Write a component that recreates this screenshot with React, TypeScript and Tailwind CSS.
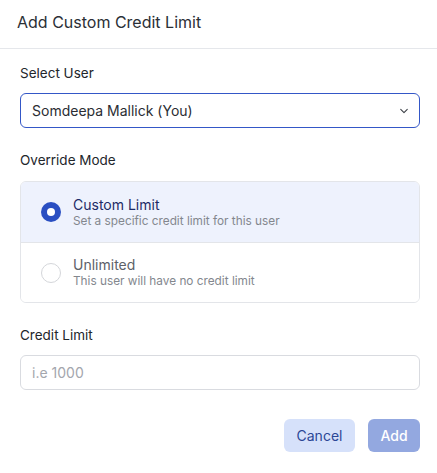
import { useState } from "react";

type Mode = "custom" | "unlimited";

const modes: { id: Mode; title: string; desc: string }[] = [
  { id: "custom", title: "Custom Limit", desc: "Set a specific credit limit for this user" },
  { id: "unlimited", title: "Unlimited", desc: "This user will have no credit limit" },
];

export default function App() {
  const [mode, setMode] = useState<Mode>("custom");
  const [limit, setLimit] = useState("");

  return (
    <div className="w-[437px] h-[473px] bg-white font-['Inter',sans-serif] text-[#1f2328]">
      <div className="h-[49px] border-b border-[#e5e7eb] pl-[17px] flex items-center">
        <h2 className="text-[16px] leading-none text-[#2b2f36] pb-[5px]">Add Custom Credit Limit</h2>
      </div>

      <div className="pl-[20px] pr-[17px] pt-[15px]">
        <label className="block text-[13.5px] leading-[18px] text-[#23262b]">Select User</label>
        <button className="mt-[11px] w-full h-[35px] rounded-[6px] border border-[#3457c7] pl-[11px] pr-[8px] flex items-center justify-between">
          <span className="text-[14px] text-[#2a2d33]">Somdeepa Mallick (You)</span>
          <svg width="14" height="14" viewBox="0 0 12 12" fill="none">
            <path d="M3.2 4.6 6 7.4 8.8 4.6" stroke="#3b3f46" strokeWidth="0.9" strokeLinecap="round" strokeLinejoin="round" />
          </svg>
        </button>

        <label className="block mt-[23px] text-[13.5px] leading-[18px] text-[#23262b]">Override Mode</label>
        <div className="mt-[12px] rounded-[6px] border border-[#e3e5e9] overflow-hidden">
          {modes.map((m, i) => {
            const on = mode === m.id;
            return (
              <button
                key={m.id}
                onClick={() => setMode(m.id)}
                className={
                  "w-full h-[60px] flex items-center text-left pl-[20px] " +
                  (i > 0 ? "border-t border-[#e3e5e9] " : "") +
                  (on ? "bg-[#eef2fd]" : "bg-white")
                }
              >
                <span
                  className={
                    "w-[20px] h-[20px] rounded-full shrink-0 flex items-center justify-center " +
                    (on ? "bg-[#2a4fc2]" : "border border-[#d4d6da] bg-white")
                  }
                >
                  {on && <span className="w-[8px] h-[8px] rounded-full bg-white" />}
                </span>
                <span className="ml-[12px] flex flex-col">
                  <span className={"text-[14px] leading-[17px] " + (on ? "text-[#1d2b66]" : "text-[#5d6168]")}>
                    {m.title}
                  </span>
                  <span className="text-[11.8px] leading-[15px] mt-[1px] text-[#83878e]">{m.desc}</span>
                </span>
              </button>
            );
          })}
        </div>

        <label className="block mt-[23px] text-[13.5px] leading-[18px] text-[#23262b]">Credit Limit</label>
        <input
          value={limit}
          onChange={(e) => setLimit(e.target.value)}
          placeholder="i.e 1000"
          className="mt-[11px] w-full h-[35px] rounded-[6px] border border-[#d9dbe0] px-[11px] text-[14px] outline-none placeholder:text-[#a3a6ad]"
        />

        <div className="mt-[29px] flex justify-end gap-[13px]">
          <button className="h-[33px] w-[71px] rounded-[6px] bg-[#d6e1fa] text-[14px] text-[#2c4796]">Cancel</button>
          <button className="h-[33px] w-[52px] rounded-[6px] bg-[#93a8e0] text-[14px] font-medium text-white">Add</button>
        </div>
      </div>
    </div>
  );
}
